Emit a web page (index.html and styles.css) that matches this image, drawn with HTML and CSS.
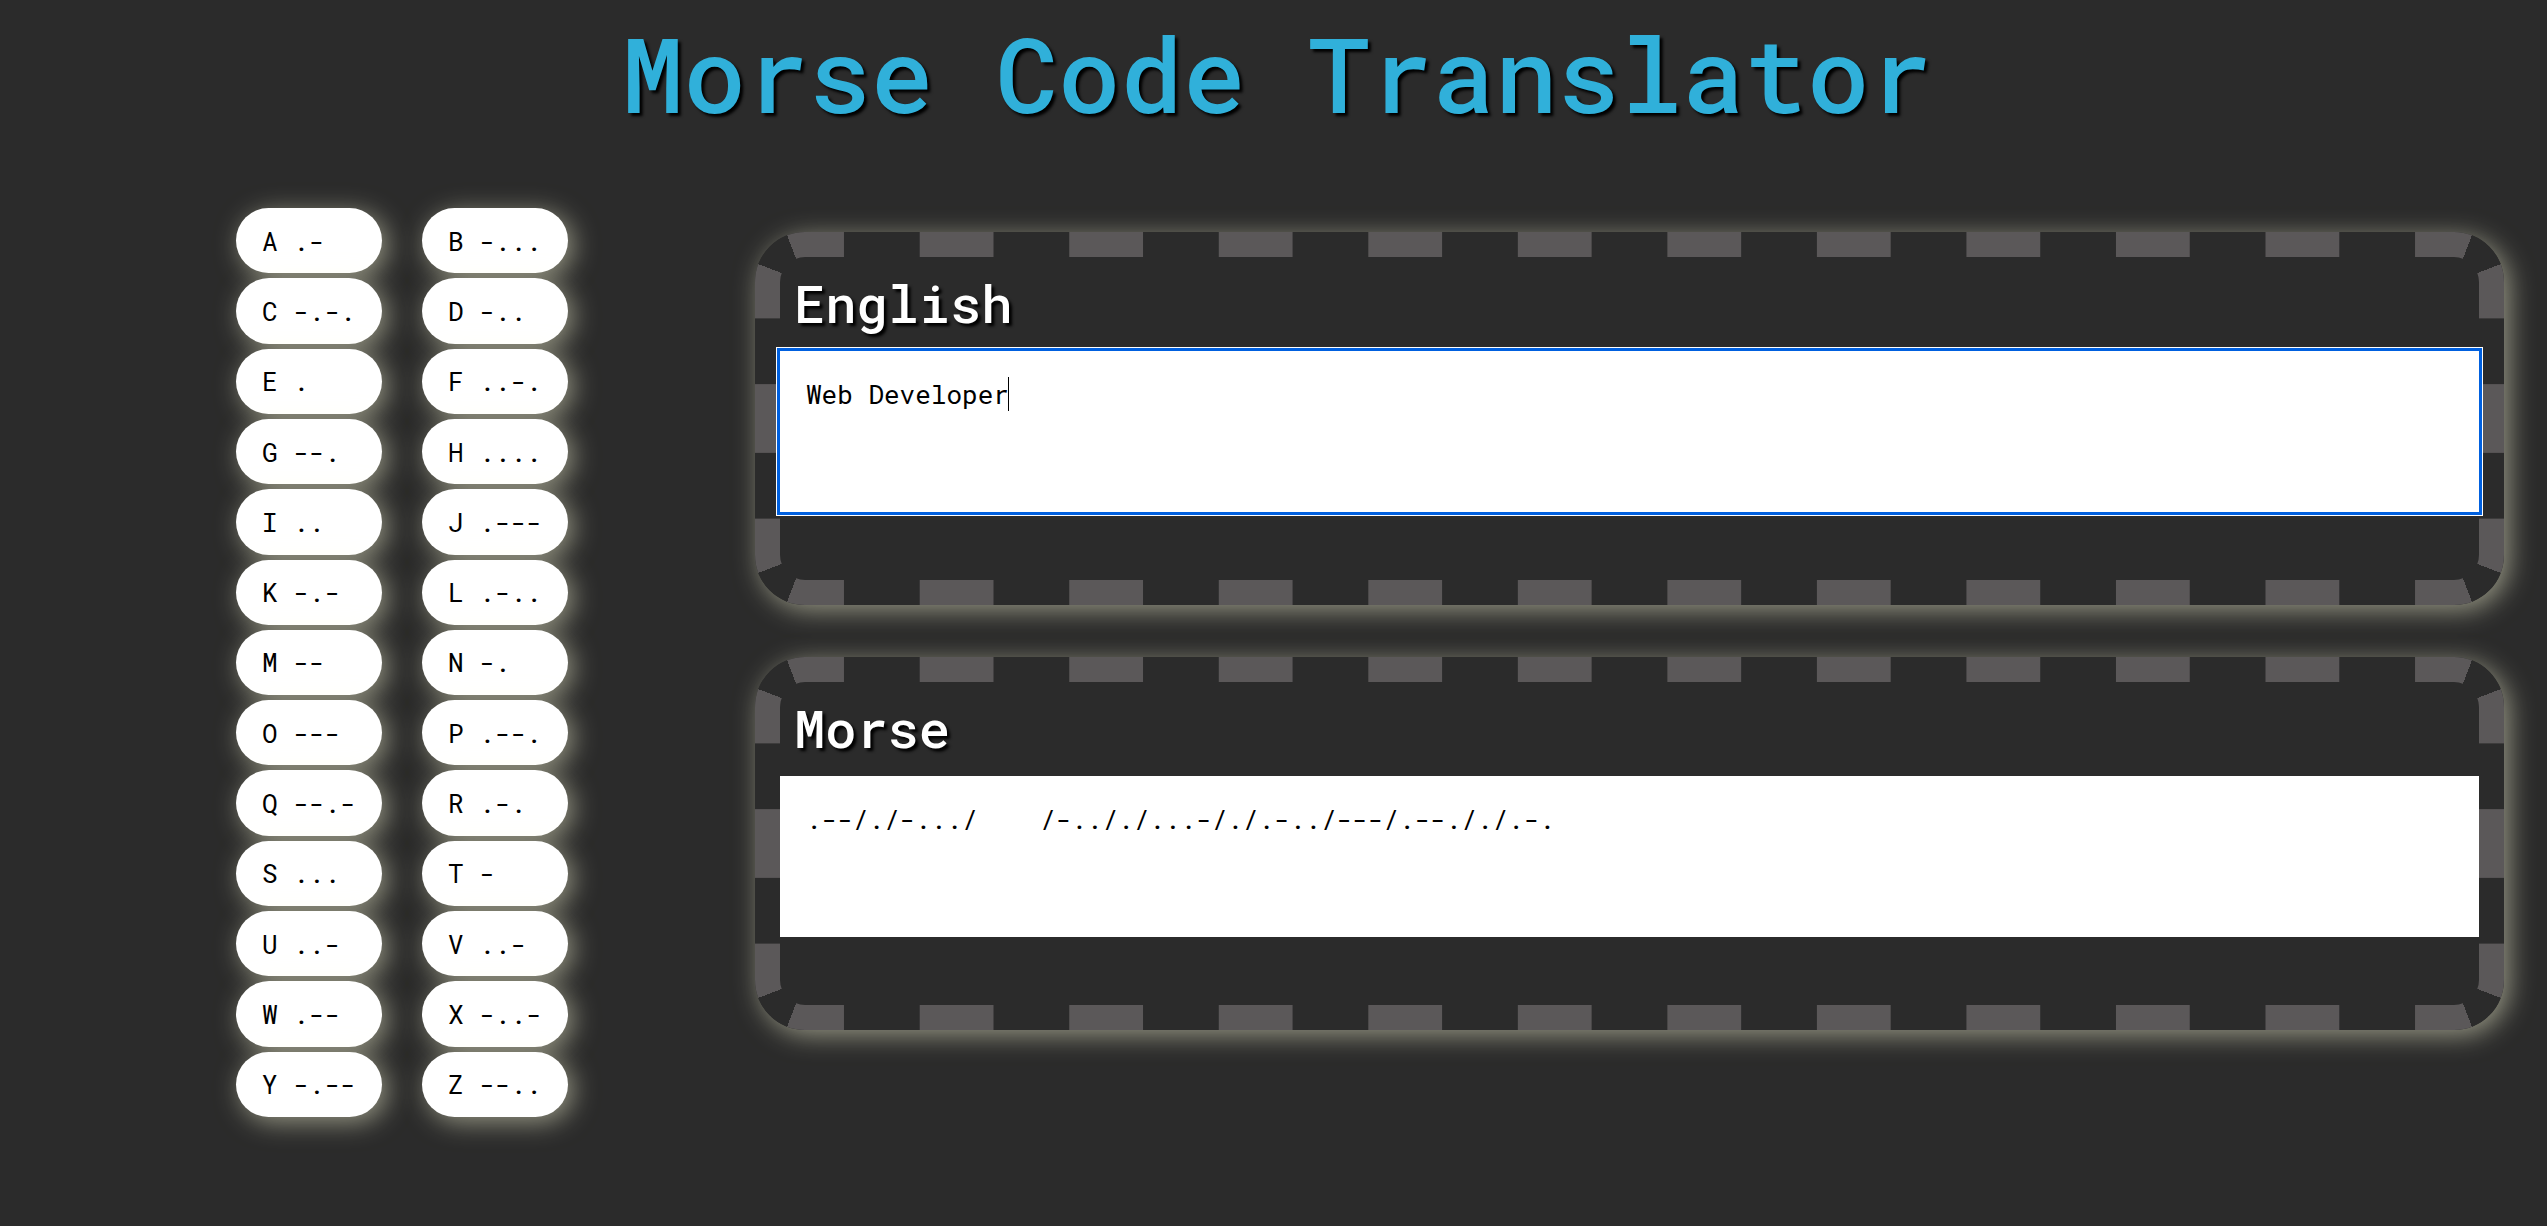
FILE: index.html
```html
<!DOCTYPE html>
<html lang="en">
<head>
<meta charset="utf-8">
<title>Morse Code Translator</title>
<link rel="stylesheet" href="styles.css">
</head>
<body>
<h1 class="title">Morse Code Translator</h1>
<main class="layout">
  <ul class="alphabet">
    <li>A .-</li><li>B -...</li>
    <li>C -.-.</li><li>D -..</li>
    <li>E .</li><li>F ..-.</li>
    <li>G --.</li><li>H ....</li>
    <li>I ..</li><li>J .---</li>
    <li>K -.-</li><li>L .-..</li>
    <li>M --</li><li>N -.</li>
    <li>O ---</li><li>P .--.</li>
    <li>Q --.-</li><li>R .-.</li>
    <li>S ...</li><li>T -</li>
    <li>U ..-</li><li>V ..-</li>
    <li>W .--</li><li>X -..-</li>
    <li>Y -.--</li><li>Z --..</li>
  </ul>
  <div class="panels">
    <section class="panel">
      <label class="panel-label" for="english">English</label>
      <div class="field">
        <textarea class="panel-text panel-text-active" id="english" spellcheck="false">Web Developer</textarea>
        <span class="caret"></span>
      </div>
    </section>
    <section class="panel">
      <label class="panel-label" for="morse">Morse</label>
      <div class="field">
        <textarea class="panel-text" id="morse" spellcheck="false">.--/./-.../    /-.././...-/./.-../---/.--././.-.</textarea>
      </div>
    </section>
  </div>
</main>
</body>
</html>
```
FILE: styles.css
```css
:root {
  --page: #2b2b2b;
  --dash: #5b5859;
  --glow: 5px 5px 26px rgba(255, 255, 220, 0.5);
}

* {
  box-sizing: border-box;
}

body {
  margin: 0;
  background: var(--page);
  color: #000;
  font-family: "Roboto Mono", "DejaVu Sans Mono", monospace;
  font-size: 26px;
}

.title {
  margin: 0;
  padding: 4px 0 0 6px;
  color: #30b0da;
  font-size: 104px;
  font-weight: 500;
  line-height: 138px;
  text-align: center;
  text-shadow: 3px 3px 3px #000;
}

.layout {
  display: grid;
  grid-template-columns: 332px minmax(0, 1fr);
  column-gap: 187px;
  align-items: start;
  padding: 66px 43px 108px 236px;
}

.alphabet {
  display: grid;
  grid-template-columns: 1fr 1fr;
  grid-auto-rows: 1fr;
  gap: 5px 40px;
  min-height: 909px;
  margin: 0;
  padding: 0;
  list-style: none;
}

.alphabet li {
  display: flex;
  align-items: center;
  padding: 0 26px;
  border-radius: 33px;
  background: #fff;
  box-shadow: var(--glow);
  white-space: pre;
}

.panels {
  display: grid;
  gap: 52px;
  padding-top: 24px;
}

/* Film-strip frame: the dashes are background layers under a clear border.
   Layers: inside, four corners, top, bottom, left, right, gaps. */
.panel {
  --across: linear-gradient(90deg, var(--dash) 37px, var(--page) 37px calc(100% - 37px), var(--dash) 0);
  --down: linear-gradient(var(--page) 33px, var(--dash) 33px calc(100% - 33px), var(--page) 0);
  --step-x: calc((100% - 104px) / 11);
  --step-y: calc((100% - 104px) / 2);
  display: flex;
  flex-direction: column;
  padding: 12px 0 68px;
  border: 25px solid transparent;
  border-radius: 50px;
  background-image:
    linear-gradient(var(--page), var(--page)),
    conic-gradient(from 270deg at 100% 100%, var(--dash) 21deg, var(--page) 21deg 69deg, var(--dash) 69deg),
    conic-gradient(from 0deg at 0% 100%, var(--dash) 21deg, var(--page) 21deg 69deg, var(--dash) 69deg),
    conic-gradient(from 90deg at 0% 0%, var(--dash) 21deg, var(--page) 21deg 69deg, var(--dash) 69deg),
    conic-gradient(from 180deg at 100% 0%, var(--dash) 21deg, var(--page) 21deg 69deg, var(--dash) 69deg),
    var(--across),
    var(--across),
    var(--down),
    var(--down),
    linear-gradient(var(--page), var(--page));
  background-size:
    auto,
    50px 50px, 50px 50px, 50px 50px, 50px 50px,
    var(--step-x) 25px, var(--step-x) 25px,
    25px var(--step-y), 25px var(--step-y),
    auto;
  background-position:
    0 0,
    left top, right top, right bottom, left bottom,
    center top, center bottom,
    left center, right center,
    0 0;
  background-repeat:
    no-repeat,
    no-repeat, no-repeat, no-repeat, no-repeat,
    repeat-x, repeat-x,
    repeat-y, repeat-y,
    no-repeat;
  background-origin: padding-box, border-box, border-box, border-box, border-box, border-box, border-box, border-box, border-box, border-box;
  background-clip: padding-box, border-box, border-box, border-box, border-box, border-box, border-box, border-box, border-box, border-box;
  box-shadow: var(--glow);
}

.panel-label {
  padding: 0 14px 13px;
  color: #fff;
  font-size: 52px;
  font-weight: 500;
  line-height: 69px;
  text-shadow: 3px 3px 3px #000;
}

.field {
  position: relative;
}

.panel-text {
  display: block;
  width: 100%;
  height: 161px;
  padding: 26px;
  border: 0;
  outline: 0;
  background: #fff;
  color: #000;
  font: inherit;
  line-height: 34px;
  resize: none;
}

.panel-text-active {
  outline: 3px solid #0060df;
  box-shadow: 0 0 0 4px #fff;
  caret-color: transparent;
}

.caret {
  position: absolute;
  top: 26px;
  left: calc(25px + 13ch);
  width: 1px;
  height: 34px;
  background: #000;
  pointer-events: none;
}
```
